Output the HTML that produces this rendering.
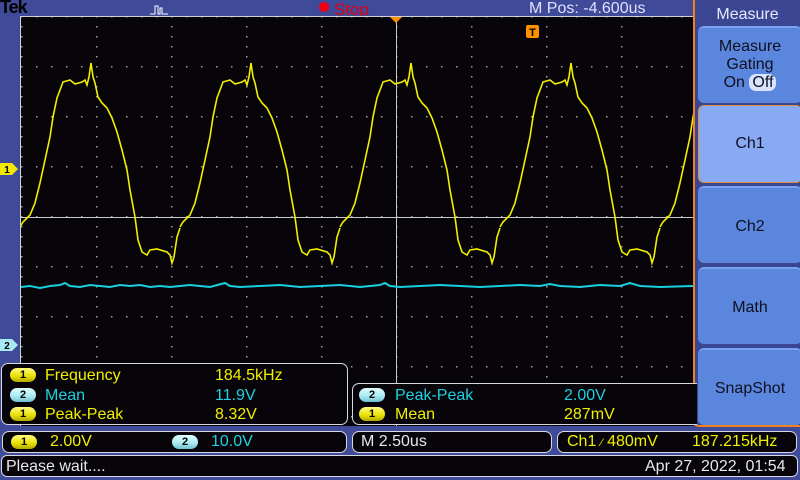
<!DOCTYPE html>
<html><head><style>
body{margin:0;width:800px;height:480px;background:#3f4a98;position:relative;overflow:hidden;font-family:"Liberation Sans",sans-serif}
.a{position:absolute}
.box{position:absolute;background:#07040a;border:1px solid #d8d8e0;border-radius:7px;box-sizing:border-box}
.t{position:absolute;font-size:16px;white-space:nowrap;line-height:17px}
.y{color:#f0f000}.c{color:#20d0e0}.w{color:#e8e8e8}
.b{position:absolute;width:26px;height:14px;border-radius:7px;font-size:11px;line-height:14px;text-align:center;color:#000;font-weight:bold}
.by{background:linear-gradient(#fffb80,#e8e000 60%,#b0a800)}
.bc{background:linear-gradient(#e0ffff,#a8e8f0 60%,#70c0d0)}
.btn{position:absolute;left:698px;width:104px;background:#5a86de;border-radius:6px;box-sizing:border-box;border-top:2px solid #7aa2f0;text-align:center;font-size:16px;color:#101020}
</style></head><body>
<div class="t" style="left:0;top:-1px;font-size:18px;font-weight:bold;color:#000;letter-spacing:-1px">Tek</div>
<svg class="a" style="left:148px;top:4px" width="22" height="12"><path d="M2 10H7V2H10V10H12V4H14V10H20" stroke="#fff" fill="none" stroke-width="1"/></svg>
<div class="a" style="left:319px;top:2px;width:10px;height:10px;border-radius:50%;background:#f00010"></div>
<div class="t" style="left:334px;top:1px;color:#e00010;font-size:17px;line-height:17px">Stop</div>
<div class="t w" style="left:529px;top:0px;color:#e0e0ff">M Pos: -4.600us</div>
<svg class="a" style="left:0;top:0" width="800" height="480">
<defs>
<pattern id="pv" x="21" y="16" width="75" height="10" patternUnits="userSpaceOnUse"><rect width="1.5" height="1.5" fill="#a0a0a0"/></pattern>
<pattern id="ph" x="21" y="16" width="15" height="50" patternUnits="userSpaceOnUse"><rect width="1.5" height="1.5" fill="#a0a0a0"/></pattern>
<clipPath id="cl"><rect x="21" y="17" width="672" height="400"/></clipPath>
<path id="w" d="M20 227L23 222L30 215L35 203L40 183L45 160L50 137L53 117L57 98L60 90L63 82L70 80L75 84L82 82L85 80L87 85L89 77L91 63L93 77L95 83L98 97L102 103L107 108L112 118L117 132L122 150L127 170L130 190L135 217L138 240L142 252L147 255L150 250L157 249L167 252L170 255L172 263L174 257L177 237L180 228"/>
</defs>
<rect x="20" y="16" width="674" height="410" fill="#07040a"/>
<rect x="20" y="16" width="674" height="410" fill="url(#pv)"/>
<rect x="20" y="16" width="674" height="410" fill="url(#ph)"/>
<line x1="20" y1="16.5" x2="694" y2="16.5" stroke="#d0d0d0"/>
<line x1="20.5" y1="16" x2="20.5" y2="426" stroke="#d0d0d0"/>
<line x1="20" y1="217.5" x2="694" y2="217.5" stroke="#c8c8c8"/>
<line x1="396.5" y1="16" x2="396.5" y2="426" stroke="#c8c8c8"/>
<g clip-path="url(#cl)" fill="none" stroke-width="1.6">
<g stroke="#f0f000"><use href="#w"/><use href="#w" x="160"/><use href="#w" x="320"/><use href="#w" x="480"/><use href="#w" x="640"/></g>
<path stroke="#18d0e0" stroke-width="2" d="M21 287L30 286L40 288L50 286L60 285L65 283L70 286L80 287L90 285L100 286L110 287L120 285L130 286L140 285L150 287L160 286L170 287L180 286L190 285L200 286L210 287L225 283L230 286L240 287L260 286L280 285L300 287L320 286L340 285L360 287L380 285L385 283L390 286L400 287L420 286L440 285L460 286L480 287L500 286L520 285L540 286L550 284L560 286L580 287L600 285L620 286L630 283L640 286L660 287L693 286"/>
</g>
<path d="M390 17H402L396 23Z" fill="#ff9000"/>
<rect x="526" y="25" width="13" height="13" rx="2" fill="#ff9000"/>
<text x="532.5" y="36" font-size="11" font-weight="bold" text-anchor="middle" font-family="Liberation Sans">T</text>
<path d="M0 163H12L18 169L12 175H0Z" fill="#f0e800"/><text x="7" y="173" font-size="10" font-weight="bold" text-anchor="middle" font-family="Liberation Sans">1</text>
<path d="M0 339H12L18 345L12 351H0Z" fill="#a8e8f0"/><text x="7" y="349" font-size="10" font-weight="bold" text-anchor="middle" font-family="Liberation Sans">2</text>
</svg>
<!-- menu -->
<div class="a" style="left:693px;top:0;width:107px;height:427px;background:#3a4692;border-left:2px solid #f08020;border-bottom:2px solid #f08020;border-radius:0 0 0 6px;box-sizing:border-box"></div>
<div class="t" style="left:695px;top:6px;width:105px;text-align:center;color:#e8e8ff">Measure</div>
<div class="btn" style="top:26px;height:77px;padding-top:10px;line-height:18px">Measure<br>Gating<br>On <span style="background:#d8e4ff;border-radius:7px;padding:0 3px">Off</span></div>
<div class="btn" style="top:105px;height:78px;line-height:76px;background:#88aaf4;border:1px solid #e09040">Ch1</div>
<div class="btn" style="top:186px;height:77px;line-height:77px">Ch2</div>
<div class="btn" style="top:267px;height:77px;line-height:77px">Math</div>
<div class="btn" style="top:348px;height:77px;line-height:77px">SnapShot</div>
<!-- measurements -->
<div class="box" style="left:1px;top:363px;width:347px;height:62px"></div>
<div class="b by" style="left:10px;top:368px">1</div><div class="t y" style="left:45px;top:367px">Frequency</div><div class="t y" style="left:215px;top:367px">184.5kHz</div>
<div class="b bc" style="left:10px;top:388px">2</div><div class="t c" style="left:45px;top:387px">Mean</div><div class="t c" style="left:215px;top:387px">11.9V</div>
<div class="b by" style="left:10px;top:407px">1</div><div class="t y" style="left:45px;top:406px">Peak-Peak</div><div class="t y" style="left:215px;top:406px">8.32V</div>
<div class="box" style="left:352px;top:383px;width:345px;height:42px;border-right:none;border-radius:7px 0 0 7px"></div>
<div class="b bc" style="left:359px;top:388px">2</div><div class="t c" style="left:395px;top:387px">Peak-Peak</div><div class="t c" style="left:564px;top:387px">2.00V</div>
<div class="b by" style="left:359px;top:407px">1</div><div class="t y" style="left:395px;top:406px">Mean</div><div class="t y" style="left:564px;top:406px">287mV</div>
<div class="box" style="left:2px;top:431px;width:345px;height:22px"></div>
<div class="b by" style="left:11px;top:435px">1</div><div class="t y" style="left:50px;top:433px">2.00V</div>
<div class="b bc" style="left:172px;top:435px">2</div><div class="t c" style="left:211px;top:433px">10.0V</div>
<div class="box" style="left:352px;top:431px;width:200px;height:22px"></div>
<div class="t w" style="left:361px;top:433px">M 2.50us</div>
<div class="box" style="left:557px;top:431px;width:240px;height:22px"></div>
<div class="t y" style="left:567px;top:433px">Ch1 <span style="font-size:11px">&#8260;</span> 480mV</div><div class="t y" style="left:692px;top:433px">187.215kHz</div>
<div class="box" style="left:1px;top:455px;width:797px;height:22px;border-radius:6px"></div>
<div class="t w" style="left:6px;top:458px">Please wait....</div>
<div class="t w" style="left:645px;top:458px">Apr 27, 2022, 01:54</div>
</body></html>
